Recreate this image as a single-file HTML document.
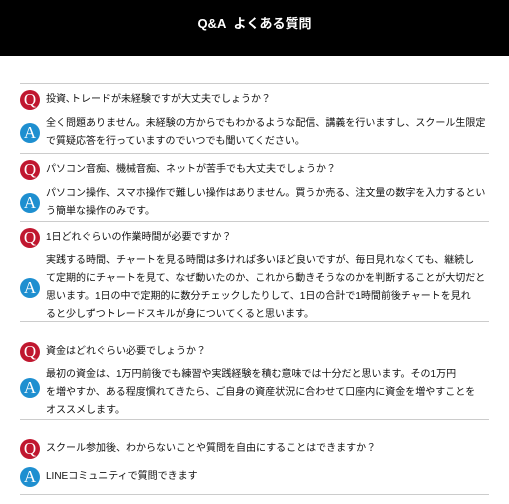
<!DOCTYPE html>
<html><head><meta charset="utf-8"><style>
body{margin:0;width:509px;height:504px;background:#fff;position:relative;overflow:hidden;font-family:"Liberation Sans","Noto Sans CJK JP",sans-serif;color:#111;}
.h{position:absolute;left:0;top:0;width:509px;height:56px;background:#000;color:#fff;font-weight:bold;font-size:13px;text-align:center;line-height:48px;}
.l{position:absolute;left:20px;width:469px;height:1px;background:#ccc;}
.i{position:absolute;left:20px;width:20px;height:20px;border-radius:50%;color:#fff;font-family:"Liberation Serif",serif;font-size:17px;line-height:20px;text-align:center;}
.q{background:#c0172f;}
.a{background:#1e8fd0;}
.t{position:absolute;left:46px;font-size:10px;line-height:18px;white-space:nowrap;}
</style></head><body>
<div class="h">Q&amp;A&nbsp; よくある質問</div>
<div class="l" style="top:83px"></div>
<div class="i q" style="top:90px">Q</div>
<div class="t" style="top:91px">投資､トレードが未経験ですが大丈夫でしょうか？</div>
<div class="i a" style="top:123px">A</div>
<div class="t" style="top:115px">全く問題ありません。未経験の方からでもわかるような配信、講義を行いますし、スクール生限定<br>で質疑応答を行っていますのでいつでも聞いてください。</div>
<div class="l" style="top:153px"></div>
<div class="i q" style="top:160px">Q</div>
<div class="t" style="top:161px">パソコン音痴、機械音痴、ネットが苦手でも大丈夫でしょうか？</div>
<div class="i a" style="top:193px">A</div>
<div class="t" style="top:185px">パソコン操作、スマホ操作で難しい操作はありません。買うか売る、注文量の数字を入力するとい<br>う簡単な操作のみです。</div>
<div class="l" style="top:221px"></div>
<div class="i q" style="top:228px">Q</div>
<div class="t" style="top:229px">1日どれぐらいの作業時間が必要ですか？</div>
<div class="i a" style="top:278px">A</div>
<div class="t" style="top:252px">実践する時間、チャートを見る時間は多ければ多いほど良いですが、毎日見れなくても、継続し<br>て定期的にチャートを見て、なぜ動いたのか、これから動きそうなのかを判断することが大切だと<br>思います。1日の中で定期的に数分チェックしたりして、1日の合計で1時間前後チャートを見れ<br>ると少しずつトレードスキルが身についてくると思います。</div>
<div class="l" style="top:321px"></div>
<div class="i q" style="top:342px">Q</div>
<div class="t" style="top:343px">資金はどれぐらい必要でしょうか？</div>
<div class="i a" style="top:378px">A</div>
<div class="t" style="top:366px">最初の資金は、1万円前後でも練習や実践経験を積む意味では十分だと思います。その1万円<br>を増やすか、ある程度慣れてきたら、ご自身の資産状況に合わせて口座内に資金を増やすことを<br>オススメします。</div>
<div class="l" style="top:419px"></div>
<div class="i q" style="top:439px">Q</div>
<div class="t" style="top:440px">スクール参加後、わからないことや質問を自由にすることはできますか？</div>
<div class="i a" style="top:467px">A</div>
<div class="t" style="top:468px">LINEコミュニティで質問できます</div>
<div class="l" style="top:494px"></div>
</body></html>
